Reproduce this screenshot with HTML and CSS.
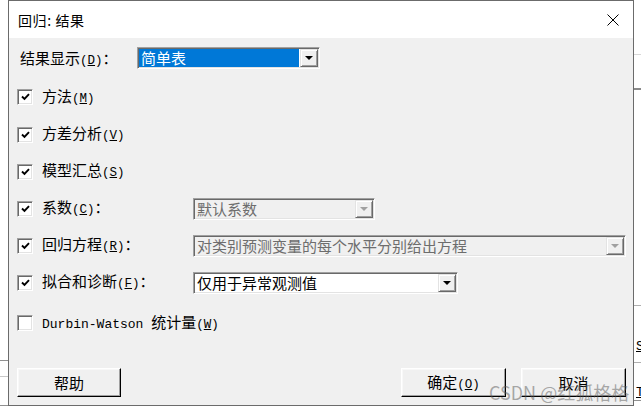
FILE: index.html
```html
<!DOCTYPE html>
<html lang="zh-CN">
<head>
<meta charset="utf-8">
<title>回归: 结果</title>
<link rel="stylesheet" href="styles.css">
</head>
<body>
<div class="desk">
  <div class="bgline r1"></div>
  <div class="bgline r2"></div>
  <div class="bgline r3"></div>
  <div class="bgline r4"></div>
  <div class="bgline r5"></div>
  <div class="bgtext s1">S</div>
  <div class="bgtext s2">T</div>
  <div class="bgline l1"></div>
  <div class="bgline l2"></div>
  <div class="bgline l3"></div>

  <div class="dialog">
    <div class="titlebar">
      <span class="title">回归: 结果</span>
      <svg class="close" width="12" height="12" viewBox="0 0 12 12"><path d="M0.5 0.5 L11.5 11.5 M11.5 0.5 L0.5 11.5" stroke="#000" stroke-width="1" fill="none"/></svg>
    </div>
    <div class="body">
      <div class="row first">
        <span class="lbl w117">结果显示<span class="lat">(<u>D</u>)</span>：</span>
        <div class="combo sel w183"><span class="val">简单表</span><span class="arrow"></span></div>
      </div>
      <div class="row h38">
        <span class="cb"><svg width="9" height="8" viewBox="0 0 9 8"><path d="M1 3.5 L3.5 6 L8 1.2" stroke="#000" stroke-width="1.9" fill="none"/></svg></span>
        <span class="lbl">方法<span class="lat">(<u>M</u>)</span></span>
      </div>
      <div class="row h37">
        <span class="cb"><svg width="9" height="8" viewBox="0 0 9 8"><path d="M1 3.5 L3.5 6 L8 1.2" stroke="#000" stroke-width="1.9" fill="none"/></svg></span>
        <span class="lbl">方差分析<span class="lat">(<u>V</u>)</span></span>
      </div>
      <div class="row h37">
        <span class="cb"><svg width="9" height="8" viewBox="0 0 9 8"><path d="M1 3.5 L3.5 6 L8 1.2" stroke="#000" stroke-width="1.9" fill="none"/></svg></span>
        <span class="lbl">模型汇总<span class="lat">(<u>S</u>)</span></span>
      </div>
      <div class="row h37">
        <span class="cb"><svg width="9" height="8" viewBox="0 0 9 8"><path d="M1 3.5 L3.5 6 L8 1.2" stroke="#000" stroke-width="1.9" fill="none"/></svg></span>
        <span class="lbl w151">系数<span class="lat">(<u>C</u>)</span>：</span>
        <div class="combo dis w182"><span class="val">默认系数</span><span class="arrow"></span></div>
      </div>
      <div class="row h37">
        <span class="cb"><svg width="9" height="8" viewBox="0 0 9 8"><path d="M1 3.5 L3.5 6 L8 1.2" stroke="#000" stroke-width="1.9" fill="none"/></svg></span>
        <span class="lbl w151">回归方程<span class="lat">(<u>R</u>)</span>：</span>
        <div class="combo dis w433"><span class="val">对类别预测变量的每个水平分别给出方程</span><span class="arrow"></span></div>
      </div>
      <div class="row h37">
        <span class="cb"><svg width="9" height="8" viewBox="0 0 9 8"><path d="M1 3.5 L3.5 6 L8 1.2" stroke="#000" stroke-width="1.9" fill="none"/></svg></span>
        <span class="lbl w151">拟合和诊断<span class="lat">(<u>F</u>)</span>：</span>
        <div class="combo w265"><span class="val">仅用于异常观测值</span><span class="arrow"></span></div>
      </div>
      <div class="row h44">
        <span class="cb"></span>
        <span class="lbl"><span class="mono">Durbin-Watson </span>统计量<span class="lat">(<u>W</u>)</span></span>
      </div>
      <div class="footer">
        <button class="btn help">帮助</button>
        <div class="actions">
          <button class="btn">确定<span class="lat">(<u>O</u>)</span></button>
          <button class="btn">取消</button>
        </div>
      </div>
    </div>
  </div>
  <div class="watermark">CSDN @红狐格格</div>
</div>
</body>
</html>
```
FILE: styles.css
```css
* { box-sizing: border-box; }
html, body { margin: 0; padding: 0; }
body {
  width: 641px;
  height: 414px;
  overflow: hidden;
  background: #fff;
  font-family: "Noto Sans CJK SC", sans-serif;
  color: #000;
}
.desk { position: relative; width: 641px; height: 414px; }

/* background window remnants */
.bgline { position: absolute; height: 1px; background: #a0a0a0; }
.r1 { left: 633px; width: 8px; top: 54px; background: #d8d8d8; }
.r2 { left: 633px; width: 8px; top: 88px; height: 2px; background: #8a8a8a; }
.r3 { left: 633px; width: 8px; top: 305px; background: #b0b0b0; }
.r4 { left: 633px; width: 8px; top: 362px; background: #b0b0b0; }
.r5 { left: 633px; width: 8px; top: 400px; background: #909090; }
.l1 { left: 0; width: 8px; top: 360px; background: #909090; }
.l2 { left: 0; width: 8px; top: 376px; background: #c8c8c8; }
.l3 { left: 0; width: 8px; top: 405px; background: #909090; }
.bgtext {
  position: absolute;
  left: 636px;
  font-family: "Liberation Mono", monospace;
  font-size: 13px;
  line-height: 1;
  text-decoration: underline;
}
.s1 { top: 340px; }
.s2 { top: 386px; }

/* dialog */
.dialog {
  position: absolute;
  left: 8px;
  top: 0;
  width: 626px;
  height: 406px;
  border: 1px solid #6b6b6b;
  background: #f0f0f0;
  display: flex;
  flex-direction: column;
}
.titlebar {
  height: 37px;
  flex: none;
  background: #fff;
  display: flex;
  align-items: center;
  padding-left: 9px;
}
.title { font-size: 14px; letter-spacing: 0.6px; line-height: 1; }
.close { margin-left: auto; margin-right: 14px; }

.body { flex: 1; display: flex; flex-direction: column; }
.row { display: flex; align-items: center; padding-left: 8px; flex: none; }
.row.first { height: 40px; align-items: flex-start; padding: 9px 0 0 11px; }
.row.first .lbl { margin-top: 3px; }
.h38 { height: 38px; }
.h37 { height: 37px; }
.h44 { height: 44px; }

.lbl { font-size: 15px; line-height: 16px; white-space: nowrap; }
.lat { font-family: "Liberation Mono", monospace; font-size: 12.5px; }
.mono { font-family: "Liberation Mono", monospace; font-size: 13px; }
.w117 { width: 117px; flex: none; }
.w151 { width: 151px; flex: none; }

.cb {
  width: 16px;
  height: 16px;
  flex: none;
  background: #fff;
  border: 1px solid;
  border-color: #a0a0a0 #fff #fff #a0a0a0;
  box-shadow: inset 1px 1px #696969, inset -1px -1px #e3e3e3;
  display: flex;
  align-items: center;
  justify-content: center;
  margin-right: 9px;
}

.combo {
  display: flex;
  height: 22px;
  flex: none;
  border: 1px solid;
  border-color: #a0a0a0 #fff #fff #a0a0a0;
  box-shadow: inset 1px 1px #696969, inset -1px -1px #e3e3e3;
  padding: 1px;
  background: #fff;
}
.w183 { width: 183px; }
.w182 { width: 182px; }
.w433 { width: 433px; }
.w265 { width: 265px; }
.combo .val {
  flex: 1;
  font-size: 15px;
  line-height: 18px;
  padding-left: 2px;
  white-space: nowrap;
  overflow: hidden;
  margin-right: 1px;
}
.combo.sel .val { background: #0078d7; color: #fff; }
.combo.dis { background: #f0f0f0; }
.combo.dis .val { color: #6d6d6d; }
.arrow {
  width: 18px;
  height: 18px;
  flex: none;
  background: #f0f0f0;
  border: 1px solid;
  border-color: #e3e3e3 #696969 #696969 #e3e3e3;
  box-shadow: inset 1px 1px #fff, inset -1px -1px #a0a0a0;
  display: flex;
  align-items: center;
  justify-content: center;
}
.arrow::after {
  content: "";
  border-left: 4px solid transparent;
  border-right: 4px solid transparent;
  border-top: 4px solid #000;
}
.combo.dis .arrow::after { border-top-color: #a0a0a0; }

.footer {
  margin-top: auto;
  display: flex;
  justify-content: space-between;
  padding: 0 7px 8px 8px;
}
.actions { display: flex; gap: 15px; }
.btn {
  height: 29px;
  width: 105px;
  padding: 0;
  background: #f0f0f0;
  border: 1px solid;
  border-color: #fff #000 #000 #fff;
  box-shadow: inset -1px -1px #a0a0a0, inset 1px 1px #f8f8f8;
  font-family: "Noto Sans CJK SC", sans-serif;
  font-size: 15px;
  line-height: 1;
  color: #000;
}
.btn.help { width: 104px; }

.watermark {
  position: absolute;
  left: 489px;
  top: 383px;
  font-family: "Noto Sans CJK SC", sans-serif;
  font-size: 18px;
  line-height: 1;
  color: rgba(90, 90, 90, 0.5);
  white-space: nowrap;
}
```
